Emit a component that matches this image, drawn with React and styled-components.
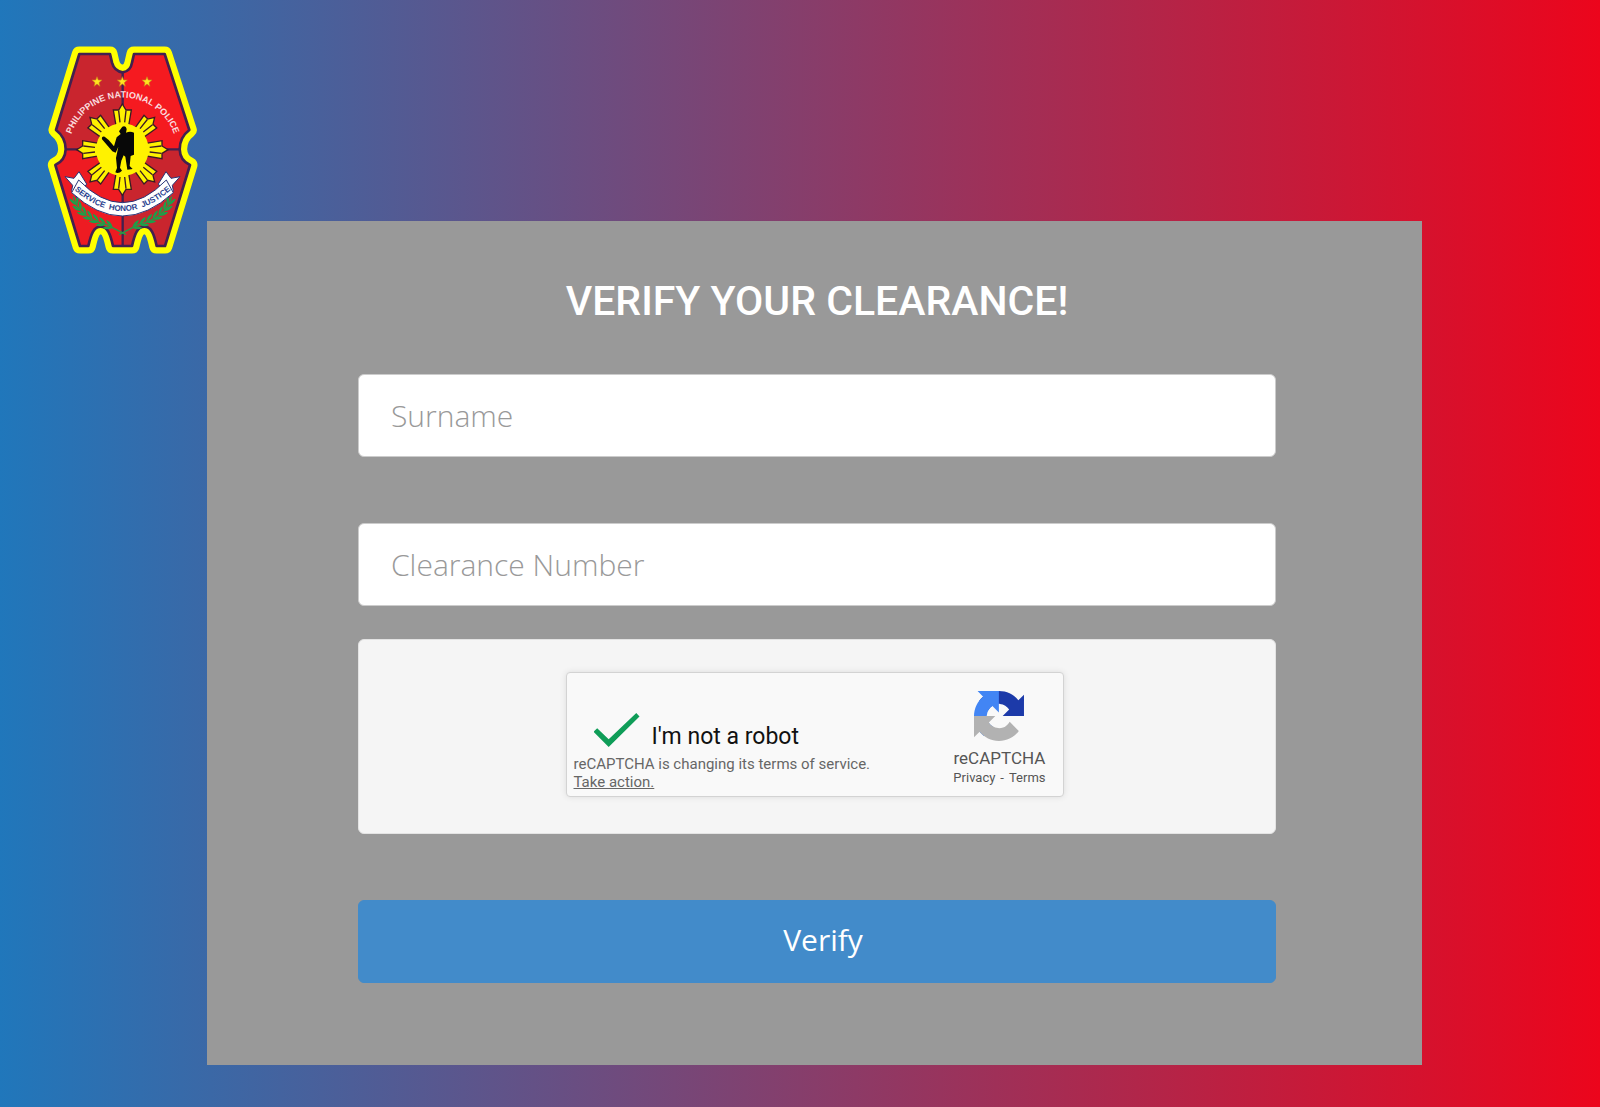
import React, { useState } from "react";
import styled, { createGlobalStyle } from "styled-components";

const BADGE =
  "M148 72 H240 L246 98 Q253 124 278 127 Q302 124 306 98 L312 72 H404 L478 300 Q449 322 449 358 Q450 392 480 405 L405 648 H380 C372 612 364 590 343 590 C322 590 314 612 306 648 H249 C241 612 233 590 212 590 C191 590 183 612 175 648 H150 L76 405 Q106 392 107 358 Q107 322 78 300 Z";

const RAYS = [0, 45, 90, 135, 180, 225, 270, 315];

const LEAVES = [
  [136, 515, 66],
  [146, 533, 56],
  [160, 548, 44],
  [177, 560, 34],
  [196, 570, 28],
  [216, 579, 24],
  [237, 588, 24],
];

function Laurel() {
  return (
    <g fill="#1da049">
      <path d="M130 500 Q145 562 230 584 L288 614" fill="none" stroke="#1da049" strokeWidth="4" />
      {LEAVES.map(([x, y, turn]) => (
        <g key={x} transform={`translate(${x} ${y}) rotate(${turn})`}>
          <path d="M12 0 Q2 -15 -15 -13 Q-10 -2 12 0Z" />
          <path d="M12 0 Q2 15 -15 13 Q-10 2 12 0Z" />
        </g>
      ))}
    </g>
  );
}

function Badge() {
  return (
    <BadgeSvg viewBox="48 45 459 630" role="img" aria-label="Philippine National Police">
      <defs>
        <clipPath id="shield">
          <path d={BADGE} />
        </clipPath>
        <path id="topArc" d="M121 322 A163 163 0 0 1 435 322" />
        <path id="ribbonArc" d="M127 474 Q277 612 429 474" />
      </defs>
      <path d={BADGE} fill="#ffff00" stroke="#ffff00" strokeWidth="45" strokeLinejoin="round" />
      <g clipPath="url(#shield)">
        <path d="M48 45H278V358H48Z" fill="#c9252e" />
        <path d="M278 45H507V358H278Z" fill="#f51a20" />
        <path d="M48 358H278V675H48Z" fill="#ee1b22" />
        <path d="M278 358H507V675H278Z" fill="#c9252e" />
        <path d="M278 100V675M48 358H507" stroke="#42204f" strokeWidth="7" />
      </g>
      <path d={BADGE} fill="none" stroke="#42204f" strokeWidth="8" strokeLinejoin="round" />

      {[201, 277, 351].map((x) => (
        <path
          key={x}
          transform={`translate(${x} 155)`}
          d="M0 -15 L4 -5 L15 -5 L6 3 L9 14 L0 7 L-9 14 L-6 3 L-15 -5 L-4 -5Z"
          fill="#ffe51f"
          stroke="#c9781c"
          strokeWidth="2"
        />
      ))}

      <BadgeText fontSize="27" fill="#fbdcdf">
        <textPath href="#topArc" startOffset="50%" textAnchor="middle">
          PHILIPPINE NATIONAL POLICE
        </textPath>
      </BadgeText>

      <g transform="translate(277 359)" fill="#fff200" stroke="#3b1a24" strokeWidth="4">
        {RAYS.map((turn) => (
          <g key={turn} transform={`rotate(${turn})`}>
            <path d="M-18 -66 L-27 -119 L-11 -119 L0 -137 L11 -119 L27 -119 L18 -66Z" />
            <path d="M-7 -82 L-11 -117 M7 -82 L11 -117" />
          </g>
        ))}
        <circle r="79" stroke="none" />
      </g>

      <path
        d="M277 290 Q288 286 290 298 L288 308 Q300 302 312 308 L312 374 L302 378 L299 408 L308 417 L292 419 L286 380 L281 376 L274 392 L270 413 L276 422 Q266 432 256 427 L261 414 L258 384 L265 350 L257 368 L247 364 L216 328 Q214 318 224 320 L236 330 L252 349 L260 322 L272 312 L267 304Z"
        fill="#080808"
      />

      <Laurel />
      <g transform="matrix(-1 0 0 1 555 0)">
        <Laurel />
      </g>

      <g fill="#fff" stroke="#293477" strokeWidth="3" strokeLinejoin="round">
        <path d="M105 440 L132 445 L147 425 L170 462 L140 504 L125 482 L128 466Z" />
        <path d="M450 440 L423 445 L408 425 L385 462 L415 504 L430 482 L427 466Z" />
        <path d="M146 450 Q277 586 409 450 L430 488 Q277 628 125 488Z" />
      </g>
      <BadgeText fontSize="24" fill="#2b3f8f">
        <textPath href="#ribbonArc" startOffset="50%" textAnchor="middle">
          {"SERVICE\u00a0 HONOR\u00a0 JUSTICE"}
        </textPath>
      </BadgeText>
    </BadgeSvg>
  );
}

function RecaptchaLogo() {
  return (
    <svg width="50" height="50" viewBox="0 0 64 64" aria-hidden="true">
      <path
        d="M64 31.955l-.033-1.37V4.687l-7.16 7.16C50.948 4.674 42.033.093 32.05.093c-10.4 0-19.622 4.96-25.458 12.64l11.736 11.86a15.55 15.55 0 0 1 4.754-5.334c2.05-1.6 4.952-2.906 8.968-2.906.485 0 .86.057 1.135.163 4.976.393 9.288 3.14 11.828 7.124l-8.307 8.307L64 31.953"
        fill="#1c3aa9"
      />
      <path
        d="M31.862.094l-1.37.033H4.594l7.16 7.16C4.58 13.147 0 22.06 0 32.046c0 10.4 4.96 19.622 12.64 25.458L24.5 45.768a15.55 15.55 0 0 1-5.334-4.754c-1.6-2.05-2.906-4.952-2.906-8.968 0-.485.057-.86.163-1.135.393-4.976 3.14-9.288 7.124-11.828l8.307 8.307L31.86.095"
        fill="#4285f4"
      />
      <path
        d="M.001 32.045l.033 1.37v25.898l7.16-7.16c5.86 7.173 14.774 11.754 24.76 11.754 10.4 0 19.622-4.96 25.458-12.64l-11.736-11.86a15.55 15.55 0 0 1-4.754 5.334c-2.05 1.6-4.952 2.906-8.968 2.906-.485 0-.86-.057-1.135-.163-4.976-.393-9.288-3.14-11.828-7.124l8.307-8.307-32.3.001"
        fill="#b2b2b2"
      />
    </svg>
  );
}

function App() {
  const [surname, setSurname] = useState("");
  const [clearance, setClearance] = useState("");

  return (
    <Page>
      <GlobalStyle />
      <Badge />
      <Form onSubmit={(e) => e.preventDefault()}>
        <Title>VERIFY YOUR CLEARANCE!</Title>
        <Fields>
          <TextInput
            aria-label="Surname"
            placeholder="Surname"
            value={surname}
            onChange={(e) => setSurname(e.target.value)}
          />
          <TextInput
            aria-label="Clearance Number"
            placeholder="Clearance Number"
            value={clearance}
            onChange={(e) => setClearance(e.target.value)}
          />
        </Fields>
        <CaptchaArea>
          <Captcha>
            <CaptchaMain>
              <RobotLabel>
                <Check type="checkbox" defaultChecked />
                I'm not a robot
              </RobotLabel>
              <Notice>
                reCAPTCHA is changing its terms of service.
                <br />
                <a href="#action">Take action.</a>
              </Notice>
            </CaptchaMain>
            <CaptchaBrand>
              <RecaptchaLogo />
              <BrandName>reCAPTCHA</BrandName>
              <BrandLinks>
                <a href="#privacy">Privacy</a>
                <span>-</span>
                <a href="#terms">Terms</a>
              </BrandLinks>
            </CaptchaBrand>
          </Captcha>
        </CaptchaArea>
        <VerifyButton type="submit">Verify</VerifyButton>
      </Form>
    </Page>
  );
}

export default App;

const GlobalStyle = createGlobalStyle`
  * {
    box-sizing: border-box;
  }

  body {
    margin: 0;
    font-family: "Roboto", "Liberation Sans", sans-serif;
  }
`;

const Page = styled.main`
  display: flex;
  align-items: flex-start;
  gap: 8px;
  min-height: 100vh;
  padding: 45px 178px 42px 46px;
  background: linear-gradient(to right, #2077bb, #ec051c);
`;

const BadgeSvg = styled.svg`
  flex: none;
  width: 153px;
  height: 210px;
`;

const BadgeText = styled.text`
  font-family: "Liberation Sans", sans-serif;
  font-weight: bold;
`;

const Form = styled.form`
  display: flex;
  flex: 1;
  flex-direction: column;
  margin-top: 176px;
  padding: 56px 146px 82px 151px;
  background: #999;
`;

const Title = styled.h1`
  margin: 0 0 49px;
  color: #fff;
  font-size: 41px;
  font-weight: 500;
  line-height: 48px;
  text-align: center;
`;

const Fields = styled.div`
  display: flex;
  flex-direction: column;
  gap: 66px;
`;

const TextInput = styled.input`
  width: 100%;
  height: 83px;
  padding: 0 32px;
  border: 1px solid #ccc;
  border-radius: 6px;
  background: #fff;
  color: #555;
  font-family: "Open Sans", sans-serif;
  font-size: 30px;
  font-weight: 300;

  &::placeholder {
    color: #999;
    opacity: 1;
  }
`;

const CaptchaArea = styled.div`
  display: flex;
  justify-content: center;
  margin: 33px 0 66px;
  padding: 32px 5px 36px 0;
  border: 1px solid #e3e3e3;
  border-radius: 6px;
  background: #f5f5f5;
`;

const Captcha = styled.div`
  display: flex;
  justify-content: space-between;
  width: 498px;
  height: 125px;
  border: 1px solid #d3d3d3;
  border-radius: 4px;
  background: #f9f9f9;
  box-shadow: 0 0 6px rgba(0, 0, 0, 0.1);
`;

const CaptchaMain = styled.div`
  display: flex;
  flex-direction: column;
  justify-content: flex-end;
  padding: 0 0 5px 7px;
`;

const RobotLabel = styled.label`
  display: flex;
  align-items: flex-end;
  gap: 12px;
  padding-left: 20px;
  color: #111;
  font-size: 23px;
  line-height: 36px;
`;

const Check = styled.input`
  appearance: none;
  width: 46px;
  height: 34px;
  margin: 0 0 8px;

  &:checked {
    background: #0f9d58;
    clip-path: polygon(0 55%, 8% 45%, 33% 77%, 93% 0, 100% 10%, 33% 100%);
  }
`;

const Notice = styled.p`
  margin: 0;
  color: #666;
  font-size: 15px;
  line-height: 18px;

  a {
    color: inherit;
  }
`;

const CaptchaBrand = styled.div`
  display: flex;
  flex-direction: column;
  align-items: center;
  padding: 18px 17px 0 0;
`;

const BrandName = styled.div`
  margin-top: 7px;
  color: #555;
  font-size: 17px;
  line-height: 20px;
`;

const BrandLinks = styled.div`
  display: flex;
  gap: 5px;
  color: #555;
  font-size: 13px;
  line-height: 20px;

  a {
    color: inherit;
    text-decoration: none;
  }
`;

const VerifyButton = styled.button`
  height: 83px;
  padding: 0 0 4px 12px;
  border: 1px solid #428bca;
  border-radius: 6px;
  background: #428bca;
  color: #fff;
  font-family: "Open Sans", sans-serif;
  font-size: 30px;
  cursor: pointer;
`;
